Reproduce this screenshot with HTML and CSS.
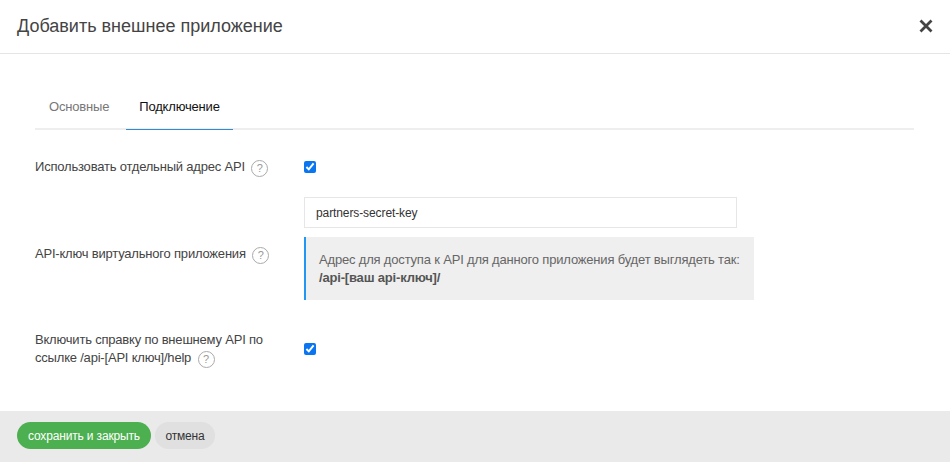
FILE: index.html
```html
<!DOCTYPE html>
<html lang="ru">
<head>
    <meta charset="UTF-8">
    <meta name="viewport" content="width=device-width, initial-scale=1.0">
    <title>Добавить внешнее приложение</title>
    <link rel="stylesheet" href="styles.css">
</head>
<body>
    <div class="modal">
        <div class="modal-header">
            <h1>Добавить внешнее приложение</h1>
            <button class="close-btn" aria-label="Закрыть">
                <svg width="14" height="14" viewBox="0 0 14 14"><path d="M1.5 1.5 L12.5 12.5 M12.5 1.5 L1.5 12.5" stroke="#444" stroke-width="2.8" fill="none"/></svg>
            </button>
        </div>

        <div class="modal-body">
            <div class="tabs">
                <a class="tab">Основные</a>
                <a class="tab active">Подключение</a>
            </div>

            <div class="form-row row-first">
                <div class="form-label">Использовать отдельный адрес API <span class="hint">?</span></div>
                <div class="form-field"><input type="checkbox" checked></div>
            </div>

            <div class="form-row row-key">
                <div class="form-label">API-ключ виртуального приложения <span class="hint">?</span></div>
                <div class="form-field">
                    <input class="text-input" type="text" value="partners-secret-key">
                    <div class="note">
                        Адрес для доступа к API для данного приложения будет выглядеть так:<br>
                        <b>/api-[ваш api-ключ]/</b>
                    </div>
                </div>
            </div>

            <div class="form-row row-help">
                <div class="form-label">Включить справку по внешнему API по<br>ссылке /api-[API ключ]/help <span class="hint">?</span></div>
                <div class="form-field"><input type="checkbox" checked></div>
            </div>
        </div>

        <div class="modal-footer">
            <button class="btn btn-save">сохранить и закрыть</button>
            <button class="btn btn-cancel">отмена</button>
        </div>
    </div>
</body>
</html>
```

FILE: styles.css
```css
html, body {
    height: 100%;
}

body {
    font-family: "Liberation Sans", Arial, sans-serif;
    margin: 0;
    background-color: #fff;
    color: #444;
    overflow: hidden;
}

.modal {
    display: flex;
    flex-direction: column;
    height: 462px;
}

.modal-header {
    display: flex;
    align-items: center;
    justify-content: space-between;
    height: 53px;
    padding: 0 17px 0 17px;
    border-bottom: 1px solid #e5e5e5;
    flex-shrink: 0;
}

.modal-header h1 {
    margin: 0;
    font-size: 18px;
    font-weight: normal;
    color: #444;
}

.close-btn {
    display: flex;
    padding: 0 0 2px;
    border: none;
    background: none;
    cursor: pointer;
}

.modal-body {
    flex: 1;
    padding: 28px 36px 0 35px;
}

.tabs {
    display: flex;
    height: 46px;
    border-bottom: 2px solid #eee;
}

.tab {
    display: block;
    padding: 0 14px;
    font-size: 13px;
    letter-spacing: -0.18px;
    line-height: 50px;
    color: #777;
}

.tab.active {
    height: 47px;
    margin-left: 3px;
    padding: 0 13px;
    color: #111;
    border-bottom: 1px solid #2e8bd8;
}

.form-row {
    display: flex;
    align-items: center;
}

.form-label {
    width: 269px;
    padding-right: 29px;
    box-sizing: border-box;
    font-size: 13px;
    letter-spacing: -0.2px;
    line-height: 18px;
    flex-shrink: 0;
}

.form-field {
    flex: 1;
}

.form-field input[type="checkbox"] {
    display: block;
    width: 12px;
    height: 12px;
    margin: 0;
    accent-color: #0a75f0;
}

.row-first {
    height: 18px;
    margin-top: 28px;
}

.row-key {
    margin-top: 21px;
}

.row-key .form-label {
    padding-top: 11px;
}

.row-help {
    margin-top: 31px;
}

.row-help input[type="checkbox"] {
    margin-bottom: 2px;
}

.hint {
    display: inline-block;
    width: 15px;
    height: 15px;
    margin-left: 3px;
    border: 1px solid #aaa;
    border-radius: 50%;
    font-size: 11px;
    letter-spacing: 0;
    line-height: 15px;
    text-align: center;
    color: #999;
    vertical-align: -1px;
}

.text-input {
    display: block;
    width: 433px;
    height: 31px;
    padding: 0 11px;
    box-sizing: border-box;
    border: 1px solid #e6e6e6;
    font-family: inherit;
    font-size: 12px;
    letter-spacing: -0.1px;
    color: #333;
}

.note {
    width: 450px;
    height: 63px;
    margin-top: 9px;
    padding: 14px 0 0 13px;
    box-sizing: border-box;
    border-left: 2px solid #2196f3;
    background-color: #efefef;
    font-size: 13px;
    letter-spacing: -0.18px;
    line-height: 18px;
    color: #666;
    white-space: nowrap;
}

.note b {
    color: #555;
}

.modal-footer {
    display: flex;
    align-items: flex-start;
    gap: 4px;
    height: 51px;
    padding: 11px 0 0 17px;
    box-sizing: border-box;
    background-color: #eaeaea;
    flex-shrink: 0;
}

.btn {
    height: 27px;
    padding: 0 11px;
    border: none;
    border-radius: 14px;
    font-family: inherit;
    font-size: 12px;
    letter-spacing: -0.16px;
    cursor: pointer;
}

.btn-save {
    background-color: #4caf50;
    color: #fff;
}

.btn-cancel {
    padding: 0 10.5px;
    background-color: #e0e0e0;
    color: #333;
}
```
